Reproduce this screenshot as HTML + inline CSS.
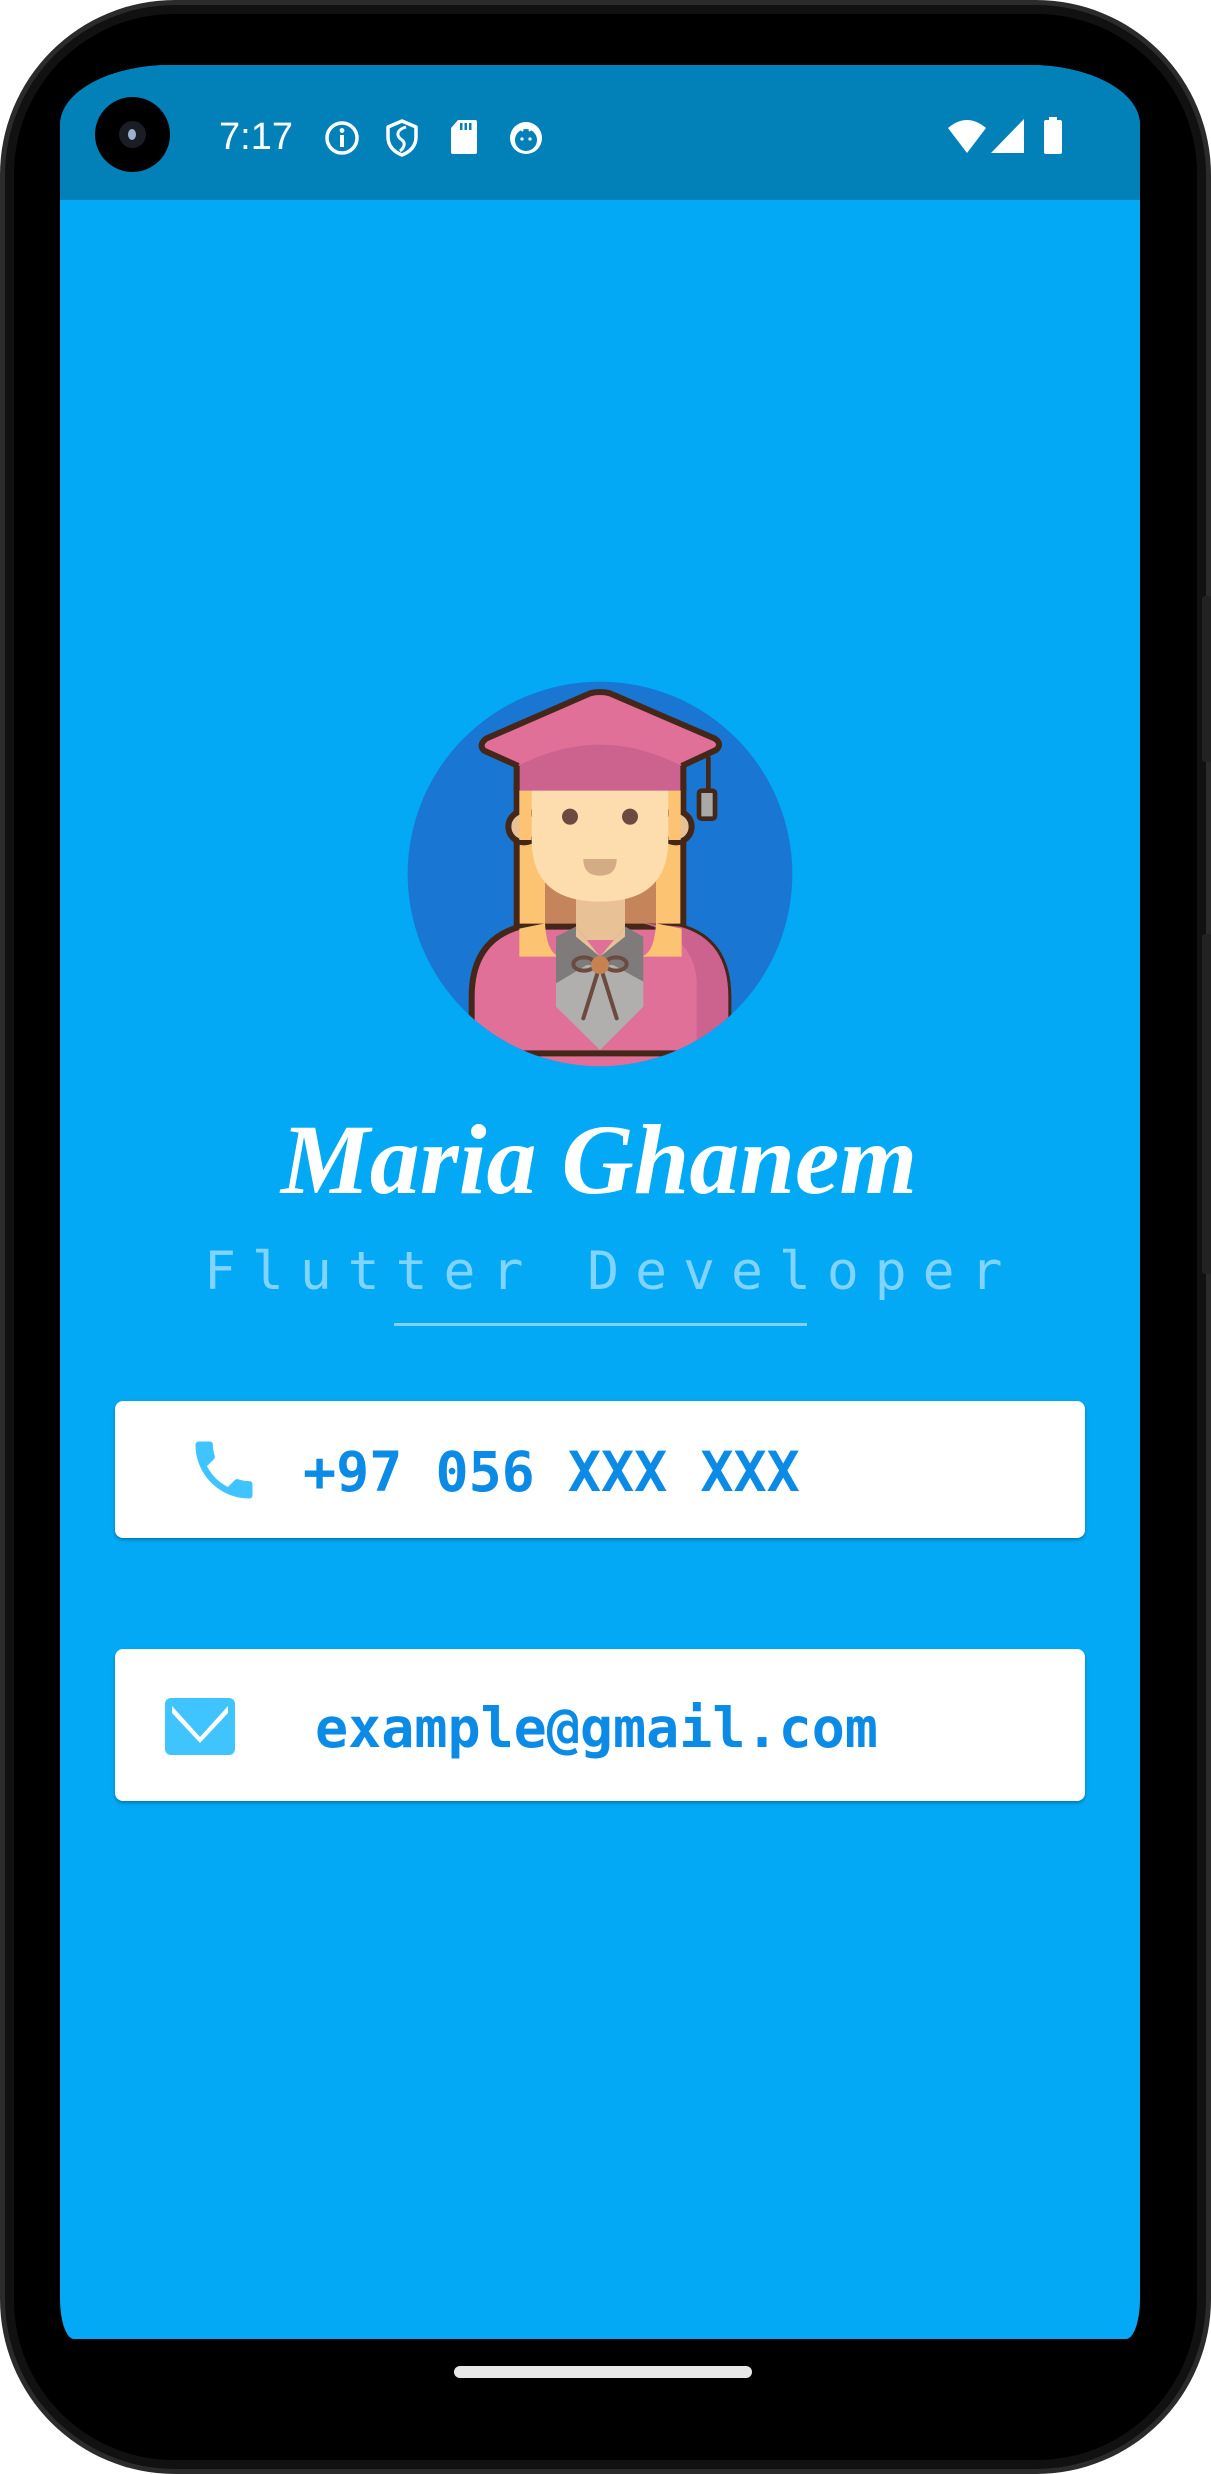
<!DOCTYPE html>
<html><head><meta charset="utf-8"><style>
html,body{margin:0;padding:0;background:#fff;}
body{width:1211px;height:2474px;position:relative;overflow:hidden;}
.abs{position:absolute;}
.card{position:absolute;left:115px;width:970px;background:#fff;border-radius:8px;box-shadow:0 2px 3px rgba(0,0,0,.28);}
.mono{font-family:"DejaVu Sans Mono",monospace;line-height:1;white-space:nowrap;}
</style></head><body>
<div class="abs" style="left:0;top:0;width:1211px;height:2474px;border-radius:175px;background:#2b2b2b;"></div>
<div class="abs" style="left:5px;top:5px;width:1201px;height:2464px;border-radius:170px;background:#111;"></div>
<div class="abs" style="left:14px;top:14px;width:1183px;height:2446px;border-radius:160px;background:#000;"></div>
<div class="abs" style="left:1202px;top:596px;width:9px;height:166px;background:#222;border-radius:3px;"></div>
<div class="abs" style="left:1202px;top:934px;width:9px;height:340px;background:#222;border-radius:3px;"></div>
<div class="abs" style="left:60px;top:65px;width:1080px;height:2274px;background:#03A9F4;border-radius:110px 110px 14px 14px / 60px 60px 40px 40px;overflow:hidden;">
  <div class="abs" style="left:0;top:0;width:1080px;height:135px;background:#0280B8;"></div>
</div>
<div class="abs" style="left:95px;top:97px;width:75px;height:75px;border-radius:50%;background:#000;"></div>
<div class="abs" style="left:119px;top:121px;width:27px;height:27px;border-radius:50%;background:#1a1d24;"></div>
<div class="abs" style="left:128px;top:129px;width:8px;height:11px;border-radius:50%;background:#9fb0cc;"></div>
<div class="abs" style="left:219px;top:118px;font-family:'Liberation Sans',sans-serif;font-size:38px;line-height:1;color:#fff;">7:17</div>
<svg class="abs" style="left:322px;top:118px" width="40" height="40" viewBox="0 0 40 40"><circle cx="20" cy="20" r="15" fill="none" stroke="#fff" stroke-width="3.5"/><rect x="18" y="17" width="4" height="12" fill="#fff"/><circle cx="20" cy="12.5" r="2.4" fill="#fff"/></svg>
<svg class="abs" style="left:384px;top:118px" width="36" height="40" viewBox="0 0 36 40"><path d="M18 3 L32 9 V19 C32 28 26 34 18 37 C10 34 4 28 4 19 V9 Z" fill="none" stroke="#fff" stroke-width="3.5" stroke-linejoin="round"/><path d="M22 9 C12 12 12 18 18 22 C22 25 20 30 16 33" fill="none" stroke="#fff" stroke-width="3"/></svg>
<svg class="abs" style="left:450px;top:119px" width="28" height="36" viewBox="0 0 28 36"><path d="M8 1 H25 Q27 1 27 3 V33 Q27 35 25 35 H3 Q1 35 1 33 V9 Z" fill="#fff"/><rect x="10" y="4" width="2.5" height="7" fill="#0280B8"/><rect x="14.5" y="4" width="2.5" height="7" fill="#0280B8"/><rect x="19" y="4" width="2.5" height="7" fill="#0280B8"/></svg>
<svg class="abs" style="left:506px;top:118px" width="40" height="40" viewBox="0 0 40 40"><circle cx="20" cy="20" r="16" fill="#fff"/><circle cx="20" cy="22" r="11" fill="#0280B8"/><circle cx="16" cy="21" r="1.6" fill="#fff"/><circle cx="24" cy="21" r="1.6" fill="#fff"/><path d="M11 14 L14 10 L17 13 M29 14 L26 10 L23 13" stroke="#fff" stroke-width="2" fill="none"/></svg>
<svg class="abs" style="left:946px;top:118px" width="42" height="36" viewBox="0 0 42 36"><path d="M21 35 L2 10 Q21 -6 40 10 Z" fill="#fff"/></svg>
<svg class="abs" style="left:990px;top:118px" width="36" height="36" viewBox="0 0 36 36"><path d="M34 1 V35 H1 Z" fill="#fff"/></svg>
<svg class="abs" style="left:1043px;top:117px" width="20" height="38" viewBox="0 0 20 38"><rect x="6" y="0" width="8" height="4" fill="#fff"/><rect x="1" y="3" width="18" height="34" rx="2" fill="#fff"/></svg>

<svg class="abs" style="left:380px;top:660px" width="450" height="420" viewBox="0 0 1350 1260">
  <defs><clipPath id="cc"><circle cx="660" cy="642" r="577"/></clipPath></defs>
  <circle cx="660" cy="642" r="577" fill="#1976D2"/>
  <g clip-path="url(#cc)">
    <rect x="410" y="380" width="500" height="520" fill="#FCC372" stroke="#45271A" stroke-width="18"/>
    <rect x="495" y="560" width="333" height="260" fill="#C6845A"/>
    <path d="M275 1260 V1010 Q275 840 420 800 L900 800 Q1045 840 1045 1010 V1260 Z" fill="#E07098" stroke="#45271A" stroke-width="18"/>
    <path d="M900 800 Q1045 840 1045 1010 V1260 H950 V960 Q940 830 790 790 Z" fill="#CC628E"/>
    <path d="M418 806 L495 790 Q500 880 540 890 L418 890 Z" fill="#FCC372"/>
    <path d="M905 806 L828 790 Q823 880 783 890 L905 890 Z" fill="#FCC372"/>
    <rect x="588" y="680" width="147" height="160" fill="#E8C196"/>
    <path d="M528 830 L588 800 L660 890 L735 800 L790 830 V1040 L660 1170 L528 1040 Z" fill="#B0AFAD"/>
    <path d="M528 830 L588 800 L660 890 L735 800 L790 830 V965 L700 915 L620 915 L528 970 Z" fill="#7F7B7B"/>
    <path d="M588 800 L660 890 L735 800 V830 L660 890 L588 830 Z" fill="#E8C196"/>
    <ellipse cx="612" cy="912" rx="32" ry="20" fill="none" stroke="#6B4A3F" stroke-width="12"/>
    <ellipse cx="708" cy="912" rx="32" ry="20" fill="none" stroke="#6B4A3F" stroke-width="12"/>
    <path d="M660 915 L610 1075 M660 915 L710 1075" stroke="#6B4A3F" stroke-width="12" stroke-linecap="round"/>
    <circle cx="660" cy="915" r="27" fill="#C6834F"/>
    <line x1="300" y1="1180" x2="1020" y2="1180" stroke="#45271A" stroke-width="18"/>
  </g>
  <circle cx="432" cy="500" r="47" fill="#E8C196" stroke="#45271A" stroke-width="18"/>
  <circle cx="888" cy="500" r="47" fill="#E8C196" stroke="#45271A" stroke-width="18"/>
  <rect x="418" y="380" width="36" height="160" fill="#FCC372"/>
  <rect x="866" y="380" width="36" height="160" fill="#FCC372"/>
  <path d="M455 390 H865 V540 Q865 725 660 725 Q455 725 455 540 Z" fill="#FDDCAE"/>
  <circle cx="570" cy="470" r="24" fill="#6B4A3F"/>
  <circle cx="750" cy="470" r="24" fill="#6B4A3F"/>
  <path d="M610 597 H710 Q710 647 660 647 Q610 647 610 597 Z" fill="#D3AB85"/>
  <path d="M410 300 Q660 180 910 300 V392 H410 Z" fill="#CC628E"/>
  <path d="M410 300 V392 M910 300 V392" stroke="#45271A" stroke-width="18"/>
  <path d="M312 262 Q300 245 320 236 L630 100 Q660 92 690 100 L1005 236 Q1025 248 1010 266 L905 318 Q660 190 415 318 Z" fill="#E07098"/>
  <path d="M415 318 L312 272 Q295 255 318 236 L630 100 Q660 92 690 100 L1005 236 Q1028 252 1008 270 L905 318" fill="none" stroke="#45271A" stroke-width="18" stroke-linejoin="round"/>
  <line x1="985" y1="290" x2="985" y2="392" stroke="#45271A" stroke-width="14"/>
  <rect x="957" y="392" width="48" height="84" rx="8" fill="#A9A9A9" stroke="#45271A" stroke-width="14"/>
</svg>

<div class="abs" style="left:0;top:1110px;width:1198px;text-align:center;font-family:'Liberation Serif',serif;font-style:italic;font-weight:bold;font-size:100px;line-height:1;color:#fff;white-space:nowrap;">Maria Ghanem</div>
<div class="abs mono" style="left:204px;top:1245px;font-size:53px;letter-spacing:16px;color:#80D4FF;">Flutter Developer</div>
<div class="abs" style="left:394px;top:1323px;width:413px;height:3px;background:#7FD3FB;"></div>

<div class="card" style="top:1401px;height:137px;"></div>
<svg class="abs" style="left:186px;top:1432px" width="76" height="76" viewBox="0 0 24 24"><path fill="#40C4FF" d="M6.62 10.79c1.44 2.830 3.76 5.14 6.59 6.59l2.2-2.2c.27-.27.67-.36 1.02-.24 1.12.37 2.33.57 3.570.57.55 0 1 .45 1 1V20c0 .55-.45 1-1 1-9.39 0-17-7.61-17-17 0-.55.45-1 1-1h3.5c.55 0 1 .45 1 1 0 1.25.2 2.45.57 3.57.11.35.03.74-.25 1.02l-2.2 2.2z"/></svg>
<div class="abs mono" style="left:303px;top:1445px;font-size:55px;font-weight:bold;color:#0B8BE6;">+97 056 XXX XXX</div>

<div class="card" style="top:1649px;height:152px;"></div>
<svg class="abs" style="left:165px;top:1698px" width="70" height="57" viewBox="0 0 70 57"><rect x="0" y="0" width="70" height="57" rx="6" fill="#40C4FF"/><path d="M7 8 L35 39 L63 8 V15 L35 45 L7 15 Z" fill="#fff"/></svg>
<div class="abs mono" style="left:315px;top:1701px;font-size:55px;font-weight:bold;color:#0B8BE6;">example@gmail.com</div>

<div class="abs" style="left:454px;top:2366px;width:298px;height:12px;border-radius:6px;background:#E8E8E8;"></div>
</body></html>
